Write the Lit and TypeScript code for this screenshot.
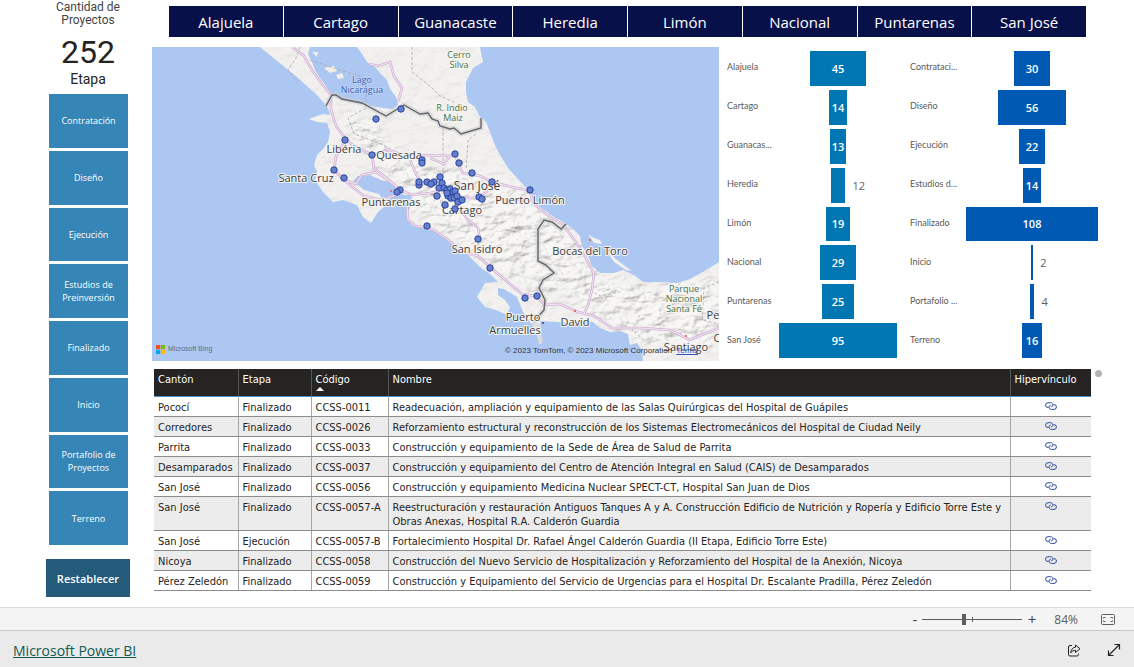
import { LitElement, html, svg, css } from "lit";
import { customElement, property } from "lit/decorators.js";

const ETAPAS = [
  "Contratación",
  "Diseño",
  "Ejecución",
  "Estudios de Preinversión",
  "Finalizado",
  "Inicio",
  "Portafolio de Proyectos",
  "Terreno",
];

const PROVINCIAS = [
  "Alajuela",
  "Cartago",
  "Guanacaste",
  "Heredia",
  "Limón",
  "Nacional",
  "Puntarenas",
  "San José",
];

type Bar = { label: string; value: number };

const POR_PROVINCIA: Bar[] = [
  { label: "Alajuela", value: 45 },
  { label: "Cartago", value: 14 },
  { label: "Guanacas...", value: 13 },
  { label: "Heredia", value: 12 },
  { label: "Limón", value: 19 },
  { label: "Nacional", value: 29 },
  { label: "Puntarenas", value: 25 },
  { label: "San José", value: 95 },
];

const POR_ETAPA: Bar[] = [
  { label: "Contrataci...", value: 30 },
  { label: "Diseño", value: 56 },
  { label: "Ejecución", value: 22 },
  { label: "Estudios d...", value: 14 },
  { label: "Finalizado", value: 108 },
  { label: "Inicio", value: 2 },
  { label: "Portafolio ...", value: 4 },
  { label: "Terreno", value: 16 },
];

const PROYECTOS = [
  ["Pococí", "Finalizado", "CCSS-0011", "Readecuación, ampliación y equipamiento de las Salas Quirúrgicas del Hospital de Guápiles"],
  ["Corredores", "Finalizado", "CCSS-0026", "Reforzamiento estructural y reconstrucción de los Sistemas Electromecánicos del Hospital de Ciudad Neily"],
  ["Parrita", "Finalizado", "CCSS-0033", "Construcción y equipamiento de la Sede de Área de Salud de Parrita"],
  ["Desamparados", "Finalizado", "CCSS-0037", "Construcción y equipamiento del Centro de Atención Integral en Salud (CAIS) de Desamparados"],
  ["San José", "Finalizado", "CCSS-0056", "Construcción y equipamiento Medicina Nuclear SPECT-CT, Hospital San Juan de Dios"],
  ["San José", "Finalizado", "CCSS-0057-A", "Reestructuración y restauración Antiguos Tanques A y A. Construcción Edificio de Nutrición y Ropería y Edificio Torre Este y Obras Anexas, Hospital R.A. Calderón Guardia"],
  ["San José", "Ejecución", "CCSS-0057-B", "Fortalecimiento Hospital Dr. Rafael Ángel Calderón Guardia (II Etapa, Edificio Torre Este)"],
  ["Nicoya", "Finalizado", "CCSS-0058", "Construcción del Nuevo Servicio de Hospitalización y Reforzamiento del Hospital de la Anexión, Nicoya"],
  ["Pérez Zeledón", "Finalizado", "CCSS-0059", "Construcción y Equipamiento del Servicio de Urgencias para el Hospital Dr. Escalante Pradilla, Pérez Zeledón"],
];

const LAND =
  "M260 47 L276 60 297 77 308 87 317 95 324 103 328 108 330 115 323 114 317 116 309 119 317 122 327 123 330 132 328 142 323 149 317 155 314 165 317 172 315 180 323 192 333 202 343 200 357 205 363 217 371 223 378 212 384 207 383 200 379 194 364 190 353 181 358 176 370 175 381 180 390 182 398 191 404 195 411 195 413 202 408 212 407 220 413 226 427 229 437 232 450 240 460 249 467 254 480 267 490 274 498 282 485 283 477 297 485 307 496 310 507 315 510 307 505 300 498 295 498 288 504 289 517 297 520 304 523 312 530 322 536 330 539 344 542 343 541 331 540 321 557 322 573 323 593 322 600 328 610 332 620 331 628 334 630 345 637 343 642 350 643 361 719 361 719 262 703 272 690 279 677 283 660 282 643 282 634 275 623 270 614 273 600 273 592 266 588 256 582 246 580 236 572 228 563 222 551 215 540 207 530 192 517 178 508 168 500 155 494 143 490 132 486 122 480 117 475 107 468 102 466 92 466 82 473 68 483 62 480 47 Z";

const LAKE =
  "M310 47 L308 54 312 62 315 70 320 78 326 86 332 95 340 99 357 103 370 106 383 108 392 109 398 105 396 97 390 89 387 80 380 73 374 66 367 62 362 54 357 47 Z";

const HILLS =
  "M340 118 L372 122 392 150 420 165 452 170 478 172 520 190 550 215 585 245 598 275 640 285 719 280 719 350 650 345 600 322 560 290 545 296 500 270 470 248 440 228 415 215 410 196 390 172 365 150 Z";

const ROADS = [
  "M292 47 L304 56 312 70 322 84 331 95 331 110 336 126 345 138 351 144 372 155 385 151 400 160",
  "M384 148 L400 154 418 155 452 156 455 155",
  "M430 158 L444 164 450 156",
  "M345 140 L336 156 334 170 344 180 356 184 362 175 376 172 388 180 400 190 412 195 430 193 445 190",
  "M372 156 L374 168 384 176 398 188",
  "M344 180 L354 188 364 196 382 200 398 194",
  "M410 160 L416 174 422 184 432 184",
  "M455 154 L460 168 463 173 480 176 493 182 508 186 530 191",
  "M493 182 L486 192 478 198 462 198 448 192",
  "M530 192 L534 204 546 214 562 224 570 234 580 248 588 262 594 274 592 290 588 305 584 314",
  "M456 204 L468 220 478 228 480 240",
  "M407 206 L408 220 416 226 430 228 446 238 462 252 478 256 491 268 510 284 522 294 536 296 545 305 560 304 578 312 594 316 612 328 640 328 670 330 690 340 704 334 719 328",
  "M370 64 L378 66 390 62 394 76 402 88 398 102",
];

const BORDERS = [
  "M326 106 L332 95 336 95 342 99 362 103 386 116 404 105 420 114 428 113 432 119 438 121 440 126 450 129 454 128 461 134 481 128 481 118",
  "M566 224 L561 229 552 222 544 220 538 229 538 261 546 265 554 273 543 280 539 288 545 300 544 310 538 317 533 322",
];

const DASHED = [
  "M300 47 L296 58 288 70 298 82",
  "M310 60 L340 70 366 78 366 106",
  "M412 47 L412 72 430 86 440 96 454 102",
  "M443 128 L443 178",
  "M476 134 L468 140 466 170",
  "M366 108 L348 118 354 134 376 142 390 148",
  "M719 282 L704 288 702 320 719 324",
  "M640 315 L632 330 644 340",
  "M590 290 L600 296 620 292",
];

const PINS = [
  [401, 109], [376, 119], [345, 140], [372, 155], [334, 170], [344, 178], [422, 160], [422, 163],
  [455, 154], [459, 163], [472, 173], [492, 182], [530, 190], [400, 190], [397, 192], [419, 185],
  [419, 182], [427, 182], [434, 182], [431, 184], [440, 177], [442, 183], [439, 188], [437, 196],
  [444, 188], [447, 190], [450, 189], [450, 194], [453, 192], [448, 196], [451, 198], [454, 198],
  [447, 193], [455, 191], [457, 196], [458, 202], [462, 200], [479, 197], [482, 199], [445, 205],
  [455, 209], [427, 226], [478, 239], [490, 268], [525, 298], [537, 296],
];

const CITIES: [string, number, number][] = [
  ["Libéria", 344, 153],
  ["Quesada", 399, 159],
  ["Santa Cruz", 306, 182],
  ["Puntarenas", 391, 206],
  ["Puerto Limón", 530, 204],
  ["Cartago", 462, 214],
  ["San Isidro", 477, 253],
  ["Bocas del Toro", 590, 255],
  ["Puerto", 523, 321],
  ["Armuelles", 515, 334],
  ["David", 575, 326],
  ["Santiago", 686, 351],
  ["Pe", 713, 319],
  ["C", 717, 342],
];

const PARKS: [string, number, number][] = [
  ["Cerro", 459, 58],
  ["Silva", 459, 68],
  ["R. Indio", 452, 111],
  ["Maiz", 453, 121],
  ["Parque", 684, 292],
  ["Nacional", 684, 302],
  ["Santa Fé", 684, 312],
];

@customElement("project-map")
class ProjectMap extends LitElement {
  static styles = css`
    :host {
      display: block;
      position: relative;
      background: #abc7f2;
      font-family: "Open Sans", "Noto Sans", sans-serif;
    }
    .canvas {
      display: block;
      width: 100%;
      height: auto;
    }
    .road-edge { fill: none; stroke: #d3b1d6; stroke-width: 2.6; }
    .road { fill: none; stroke: #f3ebf2; stroke-width: 1; }
    .halo { fill: none; stroke: #cfcfd4; stroke-width: 5; opacity: 0.6; }
    .border { fill: none; stroke: #66666a; stroke-width: 1.4; }
    .dashed { fill: none; stroke: #aaa; stroke-width: 0.8; stroke-dasharray: 3 2; }
    .label { text-anchor: middle; paint-order: stroke; stroke: #f6f5f3; stroke-width: 2px; stroke-linejoin: round; }
    .city { font-size: 11px; fill: #3c3c40; }
    .capital { font-size: 12px; fill: #3c3c40; }
    .park { font-size: 9px; fill: #44734c; }
    .lake { font-size: 9px; fill: #3d62b4; stroke: #bdd2f5; }
    .pin { fill: #6480cc; stroke: #29439c; stroke-width: 1; }
    .brand,
    .credit {
      position: absolute;
      bottom: 6px;
      display: flex;
      align-items: center;
      gap: 3px;
      font: 7px/12px "Liberation Sans", sans-serif;
      color: #6a6c70;
    }
    .brand { left: 4px; }
    .credit { right: 21px; bottom: 4px; gap: 4px; color: #333; font-size: 8px; }
    .credit a { color: #2f55b8; }
  `;

  render() {
    return html`
      <svg class="canvas" viewBox="152 47 567 314" role="img" aria-label="Mapa de proyectos">
        <defs>
          <clipPath id="land"><path d=${LAND} /></clipPath>
          <filter id="soften"><feGaussianBlur stdDeviation="7" /></filter>
          <filter id="relief" x="0" y="0" width="100%" height="100%">
            <feTurbulence type="fractalNoise" baseFrequency="0.06 0.1" numOctaves="4" seed="8" />
            <feDiffuseLighting surfaceScale="6" lighting-color="#fff" diffuseConstant="1.12">
              <feDistantLight azimuth="225" elevation="58" />
            </feDiffuseLighting>
          </filter>
          <mask id="hills">
            <rect x="152" y="47" width="567" height="314" fill="#222" />
            <path d=${HILLS} fill="#ccc" filter="url(#soften)" />
          </mask>
        </defs>
        <rect x="152" y="47" width="567" height="314" fill="#abc7f2" />
        <path d=${LAND} fill="#f1f0ee" />
        <g clip-path="url(#land)">
          <g mask="url(#hills)">
            <rect x="250" y="47" width="469" height="314" filter="url(#relief)" opacity="0.6" />
          </g>
        </g>
        <path d=${LAKE} fill="#abc7f2" />
        <path d="M324 68 L334 66 337 71 330 73Z M336 75 L342 73 344 78 338 79Z M312 52 L318 52 317 57Z" fill="#f1efe6" />
        <path d="M588 234 L594 238 600 240 602 244 594 243Z M606 250 L616 259 625 266 632 271 626 270 614 262Z" fill="#f1f0ee" />
        ${DASHED.map((d) => svg`<path class="dashed" d=${d} />`)}
        ${ROADS.map((d) => svg`<path class="road-edge" d=${d} />`)}
        ${ROADS.map((d) => svg`<path class="road" d=${d} />`)}
        ${BORDERS.map((d) => svg`<path class="halo" d=${d} /><path class="border" d=${d} />`)}
        <path d="M533 322 L538 326 541 343" class="halo" />
        <g fill="#e0603c">
          <circle cx="391" cy="191" r="1" />
          <circle cx="590" cy="240" r="1" />
          <circle cx="575" cy="311" r="1" />
          <circle cx="686" cy="336" r="1" />
        </g>
        <circle cx="543" cy="323" r="1" fill="#444" />
        <text class="label lake" x="362" y="83">Lago</text>
        <text class="label lake" x="362" y="93">Nicarágua</text>
        ${PARKS.map(([t, x, y]) => svg`<text class="label park" x=${x} y=${y}>${t}</text>`)}
        ${CITIES.map(([t, x, y]) => svg`<text class="label city" x=${x} y=${y}>${t}</text>`)}
        <text class="label capital" x="477" y="190">San José</text>
        ${PINS.map(([x, y]) => svg`<circle class="pin" cx=${x} cy=${y} r="3.2" />`)}
      </svg>
      <div class="brand">
        <svg width="9" height="9" viewBox="0 0 9 9" aria-hidden="true">
          <path fill="#f25022" d="M0 0h4.2v4.2H0z" />
          <path fill="#7fba00" d="M4.8 0H9v4.2H4.8z" />
          <path fill="#00a4ef" d="M0 4.8h4.2V9H0z" />
          <path fill="#ffb900" d="M4.8 4.8H9V9H4.8z" />
        </svg>
        <span>Microsoft Bing</span>
      </div>
      <div class="credit">
        <span>© 2023 TomTom, © 2023 Microsoft Corporation</span>
        <a href="#terms">Terms</a>
      </div>
    `;
  }
}

@customElement("funnel-chart")
class FunnelChart extends LitElement {
  @property({ attribute: false }) data: Bar[] = [];

  static styles = css`
    :host {
      display: flex;
      flex-direction: column;
      font-family: "Open Sans", "Noto Sans", sans-serif;
    }
    .row {
      flex: 1;
      display: grid;
      grid-template-columns: var(--label-width) 1fr;
    }
    .name {
      align-self: center;
      font-family: Lato, sans-serif;
      font-size: 9px;
      line-height: 12px;
      color: #5c5a58;
      white-space: nowrap;
      padding-bottom: 2px;
    }
    .track {
      display: flex;
      justify-content: center;
      padding: 2px 0;
    }
    .bar {
      position: relative;
      display: flex;
      align-items: center;
      justify-content: center;
      background: var(--bar-color);
      color: #fff;
      font-size: 11px;
      font-weight: 600;
    }
    .outside {
      position: absolute;
      left: 100%;
      margin-left: 7px;
      color: #605e5c;
      font-weight: 400;
    }
  `;

  render() {
    const max = Math.max(...this.data.map((d) => d.value));
    return this.data.map(
      ({ label, value }) => html`
        <div class="row">
          <span class="name">${label}</span>
          <div class="track">
            <div class="bar" style="width:${(value / max) * 100}%">
              <span class=${value < 13 ? "outside" : "inside"}>${value}</span>
            </div>
          </div>
        </div>
      `
    );
  }
}

@customElement("app-root")
class AppRoot extends LitElement {
  static styles = css`
    * { box-sizing: border-box; }
    :host {
      display: flex;
      flex-direction: column;
      min-height: 100vh;
      background: #fff;
      color: #252423;
      font-family: "Open Sans", "Noto Sans", sans-serif;
    }
    button { font-family: inherit; cursor: pointer; }
    .report {
      flex: 1;
      display: grid;
      grid-template-columns: 84px 1fr;
      column-gap: 22px;
      padding: 0 32px 10px 46px;
    }
    .side {
      display: flex;
      flex-direction: column;
      text-align: center;
    }
    .card {
      font-family: Roboto, sans-serif;
      color: #252423;
    }
    .caption { font-size: 12px; line-height: 13px; padding-top: 1px; color: #444; }
    .total { font-size: 32px; line-height: 40px; padding-top: 5px; }
    .legend { font-size: 14px; line-height: 14px; padding-bottom: 8px; }
    .stages {
      flex: 1;
      display: grid;
      grid-auto-rows: 1fr;
      gap: 3px;
      padding: 0 2px 0 3px;
    }
    .stage {
      border: 0;
      padding: 0 8px;
      background: #3685b7;
      color: #fff;
      font-size: 9px;
      line-height: 13px;
    }
    .reset {
      margin-top: 14px;
      height: 38px;
      border: 0;
      padding: 0;
      background: #245a7a;
      color: #fff;
      font-size: 11px;
      font-weight: 600;
    }
    .main { min-width: 0; }
    .provinces {
      display: grid;
      grid-template-columns: repeat(8, 1fr);
      gap: 1px;
      margin: 6px 16px 10px 17px;
    }
    .province {
      height: 31px;
      border: 1px solid #08104a;
      padding: 0;
      background: #08104a;
      color: #fff;
      font-size: 15px;
    }
    .visuals {
      display: grid;
      grid-template-columns: 567fr 178fr 201fr;
      align-items: start;
      padding-right: 4px;
    }
    funnel-chart {
      align-self: stretch;
      padding-top: 2px;
      padding-bottom: 1px;
    }
    .by-province { --label-width: 52px; --bar-color: #0077b3; padding-left: 8px; }
    .by-stage { --label-width: 56px; --bar-color: #005ab4; padding-left: 13px; }
    .list {
      display: flex;
      align-items: flex-start;
      gap: 4px;
      padding: 8px 0 0 2px;
    }
    table {
      flex: 1;
      width: 100%;
      border-collapse: collapse;
      table-layout: fixed;
      font-family: "DejaVu Sans Condensed", "DejaVu Sans", sans-serif;
      font-size: 11px;
      line-height: 14px;
    }
    .c-canton { width: 84px; }
    .c-etapa { width: 73px; }
    .c-codigo { width: 77px; }
    .c-link { width: 81px; }
    th {
      height: 27px;
      padding: 4px 4px 0;
      background: #252423;
      border-right: 1px solid #555;
      border-bottom: 1px solid #4a8fc0;
      color: #fff;
      font-weight: 400;
      text-align: left;
      vertical-align: top;
      white-space: nowrap;
    }
    td {
      padding: 4px 4px 1px;
      border-right: 1px solid #a6a6a6;
      border-bottom: 1px solid #8c8c8c;
      vertical-align: top;
    }
    th:last-child, td:last-child { border-right: 0; }
    tbody tr:nth-child(even) { background: #ececec; }
    .sort { display: block; width: 8px; height: 4px; }
    .link { padding-top: 5px; text-align: center; line-height: 8px; }
    .link a { display: inline-block; height: 8px; }
    .link svg { display: block; }
    .scroll { width: 7px; height: 7px; margin-top: 1px; border-radius: 50%; background: #b3b3b3; }
    .status {
      display: flex;
      align-items: center;
      justify-content: flex-end;
      height: 23px;
      padding-right: 19px;
      background: #f4f4f4;
      border-top: 1px solid #dcdcdc;
      color: #605e5c;
      font-size: 12px;
    }
    .step { border: 0; padding: 0; width: 10px; background: none; color: #444; font-size: 15px; line-height: 16px; }
    .zoom {
      appearance: none;
      width: 100px;
      height: 12px;
      margin: 0 5px 0 2px;
      background:
        linear-gradient(#605e5c, #605e5c) 50% 50% / 1px 5px no-repeat,
        linear-gradient(#605e5c, #605e5c) 0 50% / 100% 1px no-repeat;
    }
    .zoom::-webkit-slider-thumb {
      appearance: none;
      width: 4px;
      height: 11px;
      background: #605e5c;
    }
    .percent { width: 24px; margin: 0 23px 0 17px; text-align: right; white-space: nowrap; }
    .icon { display: block; border: 0; padding: 0; background: none; }
    .icon svg { display: block; }
    .footer {
      display: flex;
      align-items: center;
      gap: 26px;
      height: 37px;
      padding: 2px 13px 0;
      background: #eaeaea;
      border-top: 1px solid #c8c8c8;
    }
    .powerbi { margin-right: auto; color: #0f5b55; font-size: 14px; }
  `;

  private renderRow([canton, etapa, codigo, nombre]: string[]) {
    return html`
      <tr>
        <td>${canton}</td>
        <td>${etapa}</td>
        <td>${codigo}</td>
        <td>${nombre}</td>
        <td class="link">
          <a href="#${codigo}" aria-label="Hipervínculo ${codigo}">
            <svg width="12" height="8" viewBox="0 0 12 8" fill="none" stroke="#2a4a9c" stroke-width="1">
              <path d="M3.5 5.5H3a2.4 2.4 0 0 1 0-4.8h2.6a2.3 2.3 0 0 1 2.1 3.3 1.6 1.6 0 0 1-1.4.8" />
              <path d="M8.5 2.6H9a2.4 2.4 0 0 1 0 4.8H6.4A2.3 2.3 0 0 1 4.3 4a1.6 1.6 0 0 1 1.4-.8" />
            </svg>
          </a>
        </td>
      </tr>
    `;
  }

  render() {
    return html`
      <div class="report">
        <aside class="side">
          <div class="card">
            <div class="caption">Cantidad de Proyectos</div>
            <div class="total">252</div>
            <div class="legend">Etapa</div>
          </div>
          <div class="stages">
            ${ETAPAS.map((e) => html`<button class="stage">${e}</button>`)}
          </div>
          <button class="reset">Restablecer</button>
        </aside>
        <main class="main">
          <nav class="provinces">
            ${PROVINCIAS.map((p) => html`<button class="province">${p}</button>`)}
          </nav>
          <div class="visuals">
            <project-map></project-map>
            <funnel-chart class="by-province" .data=${POR_PROVINCIA}></funnel-chart>
            <funnel-chart class="by-stage" .data=${POR_ETAPA}></funnel-chart>
          </div>
          <div class="list">
            <table>
              <colgroup>
                <col class="c-canton" />
                <col class="c-etapa" />
                <col class="c-codigo" />
                <col />
                <col class="c-link" />
              </colgroup>
              <thead>
                <tr>
                  <th>Cantón</th>
                  <th>Etapa</th>
                  <th>
                    Código
                    <svg class="sort" viewBox="0 0 8 4" aria-hidden="true"><path d="M0 4 4 0 8 4Z" fill="#fff" /></svg>
                  </th>
                  <th>Nombre</th>
                  <th>Hipervínculo</th>
                </tr>
              </thead>
              <tbody>
                ${PROYECTOS.map((p) => this.renderRow(p))}
              </tbody>
            </table>
            <div class="scroll"></div>
          </div>
        </main>
      </div>
      <div class="status">
        <button class="step" aria-label="Alejar">-</button>
        <input class="zoom" type="range" min="0" max="200" value="84" aria-label="Zoom" />
        <button class="step" aria-label="Acercar">+</button>
        <span class="percent">84%</span>
        <button class="icon" aria-label="Ajustar a la página">
          <svg width="14" height="11" viewBox="0 0 14 11" fill="none" stroke="#605e5c">
            <rect x="0.5" y="0.5" width="13" height="10" rx="1" />
            <path d="M4.500 3.500H2.500V7.500H4.500M9.500 3.500H11.500V7.500H9.500" stroke-dasharray="3 2" />
          </svg>
        </button>
      </div>
      <footer class="footer">
        <a class="powerbi" href="#powerbi">Microsoft Power BI</a>
        <button class="icon" aria-label="Compartir">
          <svg width="14" height="13" viewBox="0 0 14 13" fill="none" stroke="#222" stroke-linejoin="round">
            <path d="M5 1.500H3A1.500 1.500 0 0 0 1.500 3v7.500A1.500 1.500 0 0 0 3 12h7a1.500 1.500 0 0 0 1.500-1.500V9.500" />
            <path d="M8.500 1 13 4.800 8.500 8.500V6.400C6.500 6.400 5 7 3.800 8.800 4 5.600 5.600 3.500 8.500 3.200Z" />
          </svg>
        </button>
        <button class="icon" aria-label="Pantalla completa">
          <svg width="14" height="14" viewBox="0 0 14 14" fill="none" stroke="#222" stroke-width="1.2">
            <path d="M1.500 12.500 12.500 1.500M7.500 1.500h5v5M1.500 7.500v5h5" />
          </svg>
        </button>
      </footer>
    `;
  }
}
